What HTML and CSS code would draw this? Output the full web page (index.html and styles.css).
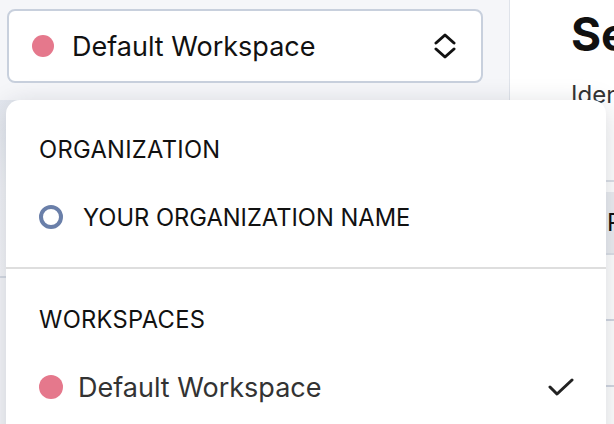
FILE: index.html
```html
<!DOCTYPE html>
<html lang="en">
<head>
    <meta charset="UTF-8">
    <title>Workspace switcher</title>
    <link rel="stylesheet" href="styles.css">
</head>
<body>
    <div class="app">
        <aside class="side">
            <button class="ws-btn" type="button">
                <span class="dot dot--pink"></span>
                <span class="ws-btn__name">Default Workspace</span>
                <svg class="ws-btn__chev" width="22" height="28" viewBox="0 0 22 28" fill="none" stroke="#111" stroke-width="3" stroke-linecap="round" stroke-linejoin="round">
                    <path d="M2 11 L11 3 L20 11"/>
                    <path d="M2 17 L11 25 L20 17"/>
                </svg>
            </button>
            <div class="side__nav"></div>
        </aside>
        <main class="main">
            <h1 class="main__title">Settings</h1>
            <p class="main__sub">Identity and access</p>
            <div class="tbl">
                <div class="tbl__head">Provider</div>
                <div class="tbl__row"></div>
                <div class="tbl__row"></div>
                <div class="tbl__row"></div>
            </div>
        </main>
    </div>

    <div class="menu">
        <div class="menu__section">
            <div class="menu__label">ORGANIZATION</div>
            <div class="menu__item">
                <span class="ring"></span>
                <span class="menu__org">YOUR ORGANIZATION NAME</span>
            </div>
        </div>
        <div class="menu__section">
            <div class="menu__label">WORKSPACES</div>
            <div class="menu__item">
                <span class="dot dot--pink dot--lg"></span>
                <span class="menu__ws">Default Workspace</span>
                <svg class="menu__check" width="26" height="20" viewBox="0 0 26 20" fill="none" stroke="#222" stroke-width="3" stroke-linecap="round" stroke-linejoin="round">
                    <path d="M2 10 L9 17 L24 3"/>
                </svg>
            </div>
        </div>
    </div>
</body>
</html>
```

FILE: styles.css
```css
body{
    margin: 0;
    font-family: Inter, "Noto Sans", sans-serif;
    color: #111;
    overflow: hidden;
    height: 424px;
}
.app{
    display: flex;
    height: 424px;
}
.side{
    width: 476px;
    padding: 9px 26px 0 7px;
    background: #f5f6f9;
    border-right: 1px solid #dfe3ea;
    flex-shrink: 0;
}
.side__nav{
    margin: 17px 0 0 -7px;
    height: 176px;
    background: linear-gradient(#e4e8ef, #f1f3f7 50%, #f5f6f9);
    border-bottom: 2px solid #d6dbe4;
}
.ws-btn{
    display: flex;
    align-items: center;
    width: 100%;
    height: 74px;
    padding: 0 25px 0 23px;
    background: #fff;
    border: 2px solid #c8d0dd;
    border-radius: 8px;
    font-family: inherit;
    box-sizing: border-box;
}
.ws-btn__name{
    flex: 1;
    margin-left: 18px;
    text-align: left;
    font-size: 27px;
    color: #111;
}
.dot{
    display: inline-block;
    width: 22px;
    height: 22px;
    border-radius: 50%;
    flex-shrink: 0;
}
.dot--pink{
    background: #e5788c;
}
.dot--lg{
    width: 24px;
    height: 24px;
}
.main{
    flex: 1;
    padding: 6px 0 0 61px;
    background: #fff;
    overflow: hidden;
}
.main__title{
    margin: 0;
    font-size: 46px;
    font-weight: 700;
    white-space: nowrap;
}
.main__sub{
    margin: 18px 0 0;
    font-size: 24px;
    color: #333;
    white-space: nowrap;
}
.tbl{
    margin: 71px 0 0 -61px;
    border-top: 2px solid #dde1e8;
}
.tbl__head{
    margin-top: 10px;
    height: 61px;
    line-height: 61px;
    padding-left: 97px;
    background: #eceef2;
    font-size: 24px;
    border-bottom: 2px solid #dde1e8;
    white-space: nowrap;
}
.tbl__row{
    height: 64px;
    border-bottom: 2px solid #d3d8e2;
}
.menu{
    position: absolute;
    left: 6px;
    top: 100px;
    width: 600px;
    height: 360px;
    background: #fff;
    border-radius: 14px;
    box-shadow: 0 6px 28px rgba(20, 30, 50, 0.18);
}
.menu__section{
    padding: 35px 32px 20px 33px;
}
.menu__section + .menu__section{
    padding-top: 36px;
    border-top: 2px solid #dedede;
}
.menu__label{
    height: 30px;
    line-height: 30px;
    font-size: 23.7px;
    letter-spacing: 0.3px;
    color: #111;
    margin-bottom: 22px;
}
.menu__item{
    display: flex;
    align-items: center;
    height: 60px;
}
.ring{
    width: 16px;
    height: 16px;
    border: 4px solid #6a7fa9;
    border-radius: 50%;
    flex-shrink: 0;
}
.menu__org{
    margin-left: 20px;
    font-size: 23.7px;
    color: #111;
}
.menu__ws{
    flex: 1;
    margin-left: 15px;
    font-size: 27px;
    color: #333;
}
```
